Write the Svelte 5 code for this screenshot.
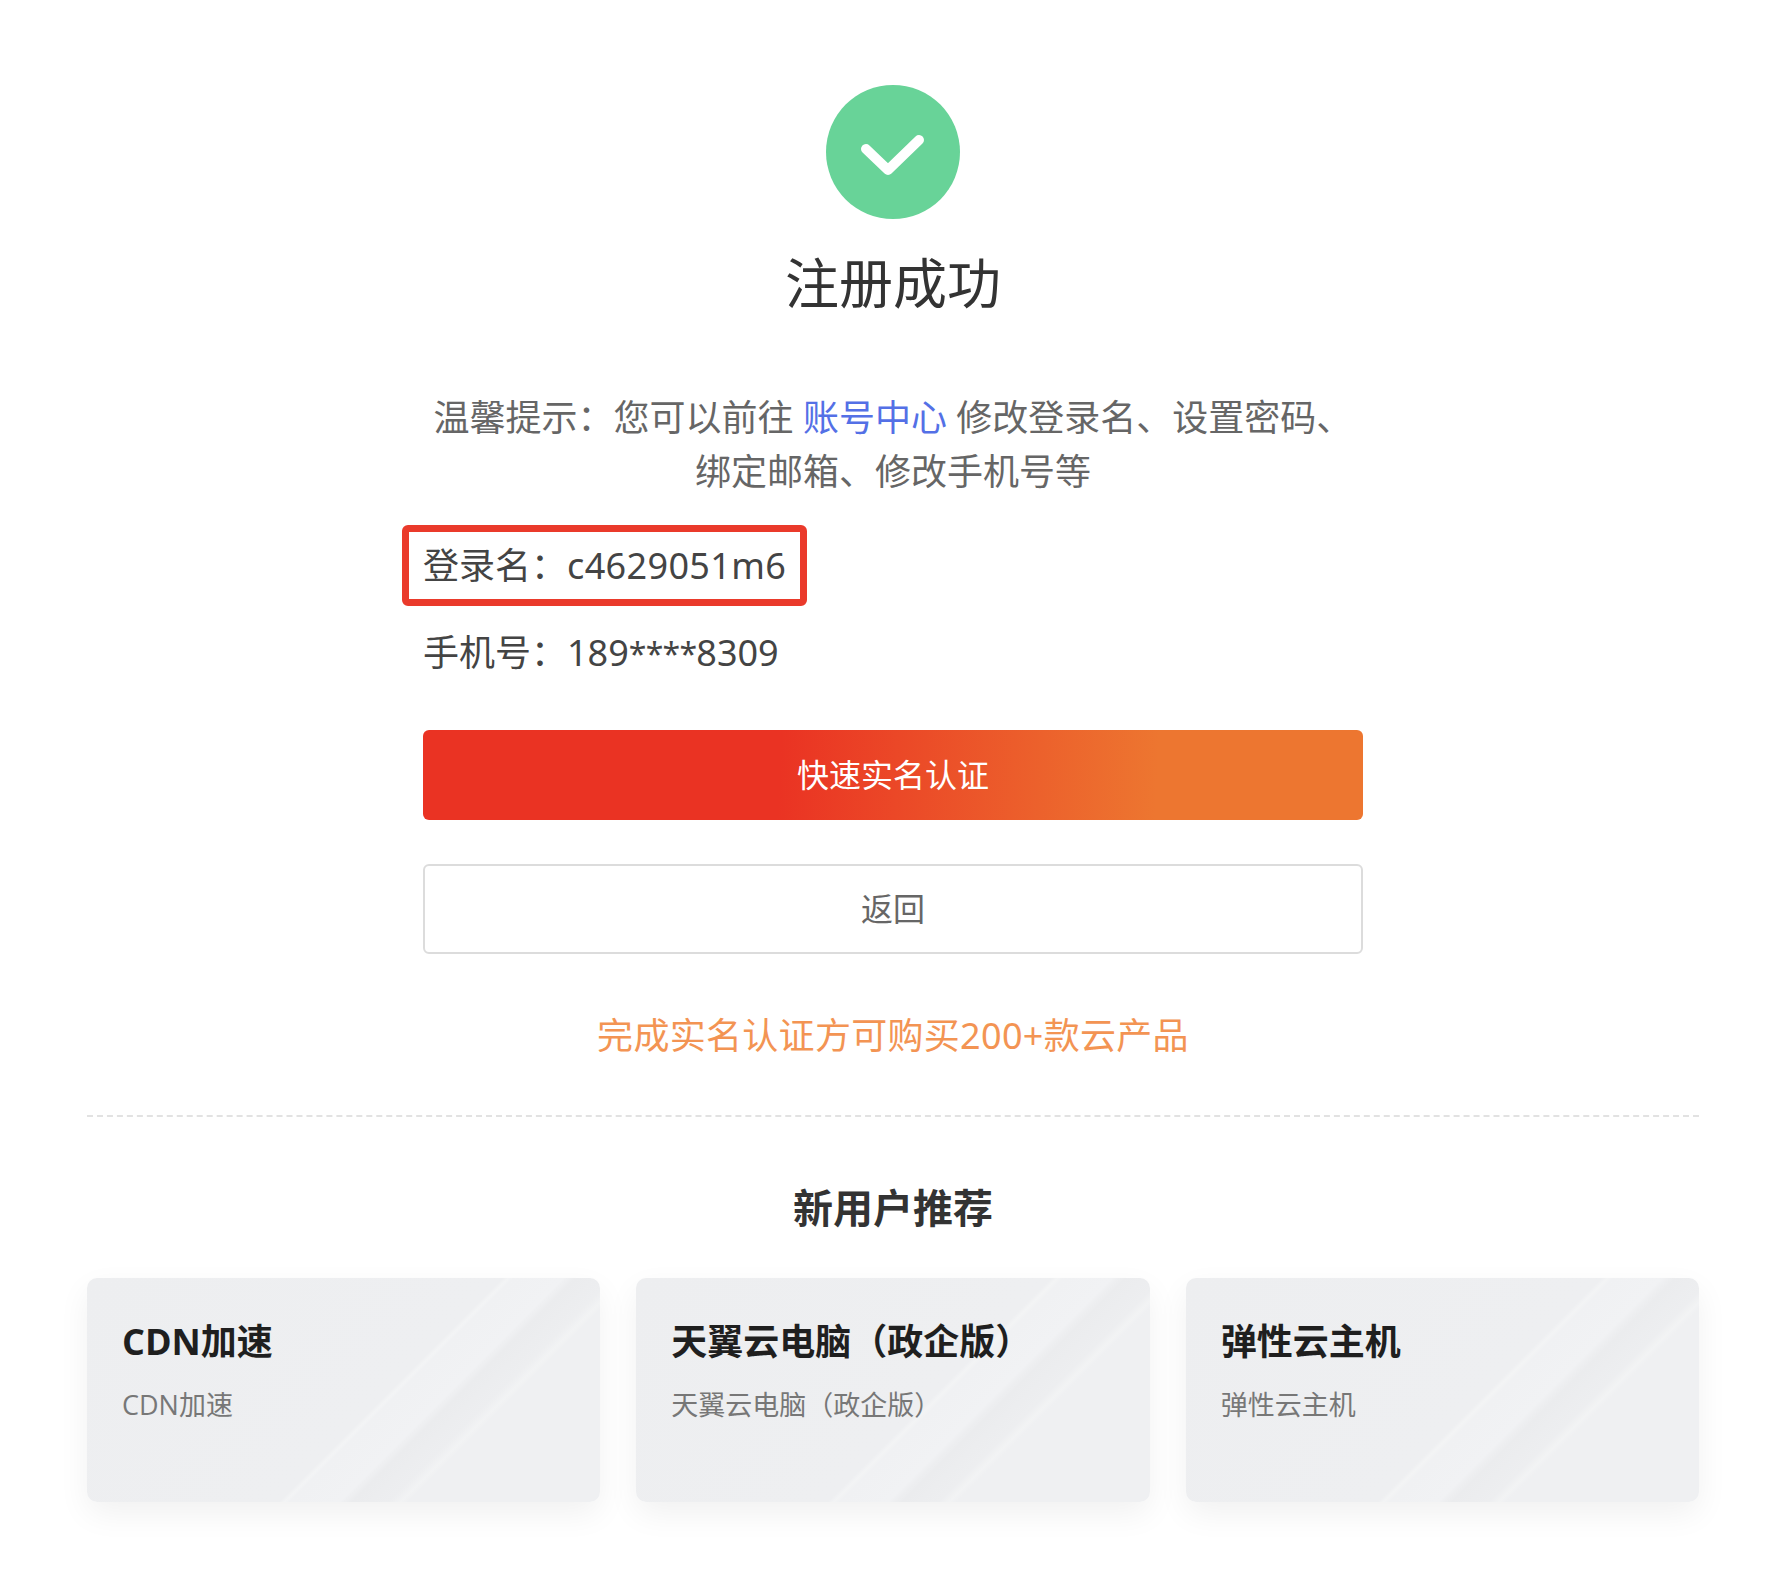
<script>
  const products = [
    { title: "CDN加速", desc: "CDN加速" },
    { title: "天翼云电脑（政企版）", desc: "天翼云电脑（政企版）" },
    { title: "弹性云主机", desc: "弹性云主机" },
  ];
</script>

<div class="page">
  <section class="result">
    <svg class="check" viewBox="0 0 134 134" aria-hidden="true">
      <circle cx="67" cy="67" r="67" fill="#68d398" />
      <path d="M40 64 L62 85 L93 55" fill="none" stroke="#fff" stroke-width="10" stroke-linecap="round" stroke-linejoin="round" />
    </svg>
    <h1>注册成功</h1>
    <p class="tip">温馨提示：您可以前往 <a href="#center">账号中心</a> 修改登录名、设置密码、绑定邮箱、修改手机号等</p>

    <div class="info">
      <div class="row"><span class="marked">登录名：<span class="login-id">c4629051m6</span></span></div>
      <div class="row phone">手机号：189<span class="stars">****</span>8309</div>
    </div>

    <button class="btn primary">快速实名认证</button>
    <button class="btn back">返回</button>
    <p class="notice">完成实名认证方可购买200+款云产品</p>
  </section>

  <hr class="divider" />

  <h2>新用户推荐</h2>
  <div class="cards">
    {#each products as item}
      <div class="card">
        <div class="card-title">{item.title}</div>
        <div class="card-desc">{item.desc}</div>
      </div>
    {/each}
  </div>
</div>

<style>
  :global(body) {
    background: #fff;
  }

  .page {
    box-sizing: border-box;
    height: 1576px;
    padding: 85px 85px 0 87px;
    font-family: "Noto Sans", "Noto Sans CJK SC", sans-serif;
    color: #333;
    overflow: hidden;
  }

  .result {
    display: flex;
    flex-direction: column;
    align-items: center;
  }

  .check {
    display: block;
    width: 134px;
    height: 134px;
  }

  h1 {
    margin: 32px 0 0;
    font-size: 54px;
    line-height: 64px;
    font-weight: 400;
    color: #333;
  }

  .tip {
    width: 940px;
    margin: 76px 0 0;
    font-size: 36px;
    line-height: 54px;
    text-align: center;
    color: #666;
  }

  .tip a {
    color: #5470e6;
    text-decoration: none;
  }

  .info {
    width: 940px;
    margin-top: 40px;
    font-size: 36px;
    line-height: 54px;
    color: #444;
  }

  .row {
    height: 54px;
  }

  .marked {
    position: relative;
    display: inline-block;
  }

  .marked::after {
    content: "";
    position: absolute;
    inset: -14px -21px -13px -21px;
    border: 7px solid #ea3a2b;
    border-radius: 6px;
  }

  .login-id {
    letter-spacing: 0.35px;
  }

  .stars {
    font-size: 32px;
    line-height: 1;
    letter-spacing: -0.75px;
  }

  .phone {
    margin-top: 33px;
  }

  .btn {
    display: block;
    box-sizing: border-box;
    width: 940px;
    height: 90px;
    padding: 0 0 5px;
    border-radius: 6px;
    font-family: inherit;
    font-size: 32px;
    cursor: pointer;
  }

  .primary {
    margin-top: 50px;
    border: 0;
    color: #fff;
    background: linear-gradient(93deg, #ea3323 0%, #ea3323 38%, #ed7630 78%, #ed7630 100%);
  }

  .back {
    margin-top: 44px;
    border: 2px solid #dcdcdc;
    background: #fff;
    color: #666;
  }

  .notice {
    margin: 55px 0 0;
    font-size: 36px;
    line-height: 54px;
    letter-spacing: 0.3px;
    color: #f39453;
  }

  .divider {
    margin: 52px 0 0;
    border: 0;
    border-top: 2px dashed #e2e2e2;
  }

  h2 {
    margin: 63px 0 0;
    font-size: 40px;
    line-height: 56px;
    font-weight: 700;
    text-align: center;
    color: #333;
  }

  .cards {
    display: grid;
    grid-template-columns: repeat(3, 1fr);
    gap: 36px;
    margin-top: 42px;
  }

  .card {
    box-sizing: border-box;
    height: 224px;
    padding: 39px 35px 0;
    border-radius: 10px;
    box-shadow: 0 12px 32px rgba(0, 0, 0, 0.06);
    background: linear-gradient(
      135deg,
      #edeef0 0,
      #eeeff1 294px,
      #f3f4f5 298px,
      #f0f1f3 302px,
      #f1f2f4 337px,
      #eff0f2 339px,
      #ebecee 346px,
      #edeef0 372px,
      #f2f3f4 380px,
      #eff0f2 385px,
      #eff0f2 100%
    );
  }

  .card-title {
    font-family: "Open Sans", "Noto Sans CJK SC", sans-serif;
    font-size: 36px;
    line-height: 50px;
    font-weight: 700;
    color: #1f1f1f;
  }

  .card-desc {
    font-family: "Open Sans", "Noto Sans CJK SC", sans-serif;
    margin-top: 18px;
    font-size: 27px;
    line-height: 40px;
    color: #777;
  }
</style>
